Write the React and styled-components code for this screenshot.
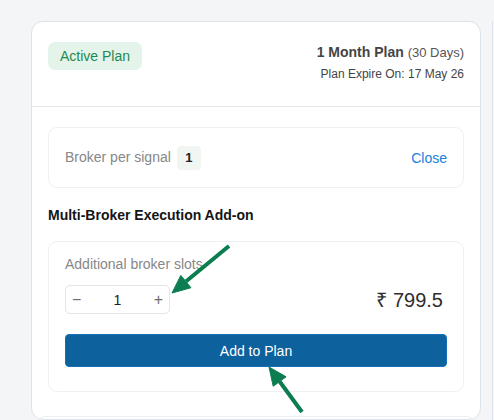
import styled, { createGlobalStyle } from "styled-components";

const GlobalStyle = createGlobalStyle`
  html, body {
    margin: 0;
    padding: 0;
    background: #f4f5f7;
    font-family: "Liberation Sans", Arial, sans-serif;
    overflow: hidden;
  }
`;

const Page = styled.div`
  display: flex;
  gap: 11px;
  padding: 21px 0 0 31px;
  height: 420px;
  box-sizing: border-box;
  position: relative;
`;

const Card = styled.div`
  width: 450px;
  flex-shrink: 0;
  background: #fff;
  border: 1px solid #dde3ec;
  border-radius: 12px;
  box-sizing: border-box;
`;

const SidePanel = styled.div`
  flex: 1;
  background: #f7f8fa;
  border-left: 1px solid #dbe3ee;
`;

const Header = styled.div`
  display: flex;
  justify-content: space-between;
  align-items: flex-start;
  padding: 20px 16px 24px;
  border-bottom: 1px solid #e4e8ed;
`;

const Badge = styled.span`
  display: inline-block;
  height: 28px;
  line-height: 28px;
  padding: 0 12px;
  border-radius: 7px;
  background: #e5f4ea;
  color: #1f8a4f;
  font-size: 14px;
`;

const PlanInfo = styled.div`
  text-align: right;
`;

const PlanTitle = styled.div`
  line-height: 20px;
  font-size: 14px;
  font-weight: bold;
  color: #454545;

  span {
    font-weight: normal;
    font-size: 13px;
    color: #555;
  }
`;

const Expire = styled.div`
  margin-top: 3px;
  line-height: 16px;
  font-size: 12px;
  color: #444;
`;

const Body = styled.div`
  padding: 20px 16px 0;
`;

const Box = styled.div`
  border: 1px solid #eef0f3;
  border-radius: 9px;
  box-sizing: border-box;
`;

const SignalRow = styled(Box)`
  display: flex;
  align-items: center;
  justify-content: space-between;
  height: 61px;
  padding: 0 16px;
`;

const Muted = styled.span`
  color: #878787;
  font-size: 14px;
`;

const CountChip = styled.span`
  display: inline-block;
  margin-left: 6px;
  width: 24px;
  height: 24px;
  line-height: 24px;
  text-align: center;
  border-radius: 4px;
  background: #f1f6f3;
  color: #222;
  font-size: 13px;
  font-weight: bold;
`;

const LinkButton = styled.button`
  border: none;
  background: none;
  padding: 0;
  font: inherit;
  font-size: 14px;
  color: #2080de;
  cursor: pointer;
`;

const SectionTitle = styled.h3`
  margin: 19px 0 18px;
  font-size: 14px;
  line-height: 16px;
  color: #151515;
`;

const AddonBox = styled(Box)`
  padding: 13px 16px 24px;
`;

const AddonRow = styled.div`
  display: flex;
  justify-content: space-between;
  align-items: center;
  margin-top: 12px;
`;

const Stepper = styled.div`
  display: flex;
  align-items: center;
  justify-content: space-between;
  width: 105px;
  height: 29px;
  box-sizing: border-box;
  border: 1px solid #e2e4e7;
  border-radius: 5px;
  padding: 0 2px;
`;

const StepButton = styled.button`
  border: none;
  background: none;
  padding: 0 4px;
  font: inherit;
  font-size: 16px;
  color: #6d6d6d;
  cursor: pointer;
`;

const StepValue = styled.span`
  font-size: 14px;
  color: #222;
`;

const Price = styled.span`
  font-size: 20px;
  color: #2e2e2e;
  margin-right: 4px;
`;

const PrimaryButton = styled.button`
  display: block;
  width: 100%;
  height: 33px;
  margin-top: 20px;
  border: 1px solid #1670b8;
  border-radius: 4px;
  background: #0d619d;
  color: #fff;
  font: inherit;
  font-size: 14px;
  cursor: pointer;
`;

const NextBox = styled.div`
  margin: 24px -12px 0;
  height: 20px;
  border: 1px solid #eef0f3;
  border-bottom: none;
  border-radius: 10px 10px 0 0;
`;

const Annotations = styled.svg`
  position: absolute;
  top: 0;
  left: 0;
  pointer-events: none;
`;

function Arrow({ x1, y1, x2, y2 }) {
  const dx = x2 - x1;
  const dy = y2 - y1;
  const len = Math.hypot(dx, dy);
  const ux = dx / len;
  const uy = dy / len;
  const head = 18;
  const half = 8;
  const bx = x2 - ux * head;
  const by = y2 - uy * head;
  const px = -uy * half;
  const py = ux * half;
  return (
    <g fill="#0b7d50" stroke="#0b7d50">
      <line x1={x1} y1={y1} x2={bx} y2={by} strokeWidth="4" />
      <polygon
        points={`${x2},${y2} ${bx + px},${by + py} ${bx - px},${by - py}`}
        strokeWidth="1"
      />
    </g>
  );
}

export default function App() {
  return (
    <>
      <GlobalStyle />
      <Page>
        <Card>
          <Header>
            <Badge>Active Plan</Badge>
            <PlanInfo>
              <PlanTitle>
                1 Month Plan <span>(30 Days)</span>
              </PlanTitle>
              <Expire>Plan Expire On: 17 May 26</Expire>
            </PlanInfo>
          </Header>
          <Body>
            <SignalRow>
              <div>
                <Muted>Broker per signal</Muted>
                <CountChip>1</CountChip>
              </div>
              <LinkButton>Close</LinkButton>
            </SignalRow>
            <SectionTitle>Multi-Broker Execution Add-on</SectionTitle>
            <AddonBox>
              <Muted>Additional broker slots</Muted>
              <AddonRow>
                <Stepper>
                  <StepButton>−</StepButton>
                  <StepValue>1</StepValue>
                  <StepButton>+</StepButton>
                </Stepper>
                <Price>₹ 799.5</Price>
              </AddonRow>
              <PrimaryButton>Add to Plan</PrimaryButton>
            </AddonBox>
            <NextBox />
          </Body>
        </Card>
        <SidePanel />
        <Annotations width="494" height="420">
          <Arrow x1={229} y1={246} x2={172} y2={293} />
          <Arrow x1={302} y1={412} x2={269} y2={367} />
        </Annotations>
      </Page>
    </>
  );
}
